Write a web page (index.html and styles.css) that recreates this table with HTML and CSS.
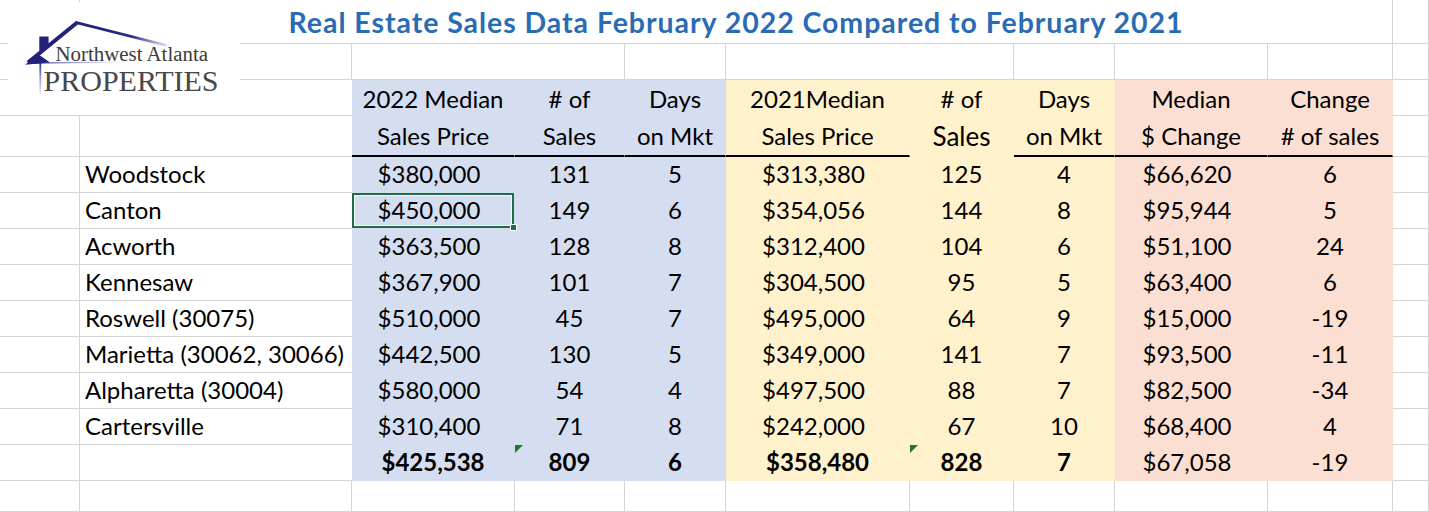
FILE: index.html
```html
<!DOCTYPE html>
<html>
<head>
<meta charset="utf-8">
<link rel="stylesheet" href="styles.css">
</head>
<body>
<div class="sheet">
  <!-- row 1 -->
  <div class="c"></div>
  <div class="c title span9">Real Estate Sales Data February 2022 Compared to February 2021</div>
  <div class="c"></div>
  <!-- row 2 -->
  <div class="c"></div>
  <div class="c"></div>
  <div class="c span2"></div>
  <div class="c"></div>
  <div class="c span2"></div>
  <div class="c"></div>
  <div class="c"></div>
  <div class="c"></div>
  <div class="c"></div>
  <!-- row 3 -->
  <div class="c"></div>
  <div class="c nr"></div>
  <div class="c f blue h1">2022 Median</div>
  <div class="c f blue h1"># of</div>
  <div class="c f blue h1">Days</div>
  <div class="c f yel h1">2021Median</div>
  <div class="c f yel h1"># of</div>
  <div class="c f yel h1">Days</div>
  <div class="c f pch h1">Median</div>
  <div class="c f pch h1">Change</div>
  <div class="c"></div>
  <!-- row 4 -->
  <div class="c"></div>
  <div class="c nr"></div>
  <div class="c f blue h2 hb">Sales Price</div>
  <div class="c f blue h2 hb">Sales</div>
  <div class="c f blue h2 hb">on Mkt</div>
  <div class="c f yel h2 hb">Sales Price</div>
  <div class="c f yel h2 big">Sales</div>
  <div class="c f yel h2 hb">on Mkt</div>
  <div class="c f pch h2 hb">$ Change</div>
  <div class="c f pch h2 hb"># of sales</div>
  <div class="c"></div>
  <!-- data rows -->
  <div class="c"></div><div class="c nr name">Woodstock</div>
  <div class="c f blue cur">$380,000</div><div class="c f blue">131</div><div class="c f blue">5</div>
  <div class="c f yel cur">$313,380</div><div class="c f yel">125</div><div class="c f yel">4</div>
  <div class="c f pch cur">$66,620</div><div class="c f pch">6</div><div class="c"></div>

  <div class="c"></div><div class="c nr name">Canton</div>
  <div class="c f blue cur sel">$450,000</div><div class="c f blue">149</div><div class="c f blue">6</div>
  <div class="c f yel cur">$354,056</div><div class="c f yel">144</div><div class="c f yel">8</div>
  <div class="c f pch cur">$95,944</div><div class="c f pch">5</div><div class="c"></div>

  <div class="c"></div><div class="c nr name">Acworth</div>
  <div class="c f blue cur">$363,500</div><div class="c f blue">128</div><div class="c f blue">8</div>
  <div class="c f yel cur">$312,400</div><div class="c f yel">104</div><div class="c f yel">6</div>
  <div class="c f pch cur">$51,100</div><div class="c f pch">24</div><div class="c"></div>

  <div class="c"></div><div class="c nr name">Kennesaw</div>
  <div class="c f blue cur">$367,900</div><div class="c f blue">101</div><div class="c f blue">7</div>
  <div class="c f yel cur">$304,500</div><div class="c f yel">95</div><div class="c f yel">5</div>
  <div class="c f pch cur">$63,400</div><div class="c f pch">6</div><div class="c"></div>

  <div class="c"></div><div class="c nr name">Roswell (30075)</div>
  <div class="c f blue cur">$510,000</div><div class="c f blue">45</div><div class="c f blue">7</div>
  <div class="c f yel cur">$495,000</div><div class="c f yel">64</div><div class="c f yel">9</div>
  <div class="c f pch cur">$15,000</div><div class="c f pch">-19</div><div class="c"></div>

  <div class="c"></div><div class="c nr name">Marietta (30062, 30066)</div>
  <div class="c f blue cur">$442,500</div><div class="c f blue">130</div><div class="c f blue">5</div>
  <div class="c f yel cur">$349,000</div><div class="c f yel">141</div><div class="c f yel">7</div>
  <div class="c f pch cur">$93,500</div><div class="c f pch">-11</div><div class="c"></div>

  <div class="c"></div><div class="c nr name">Alpharetta (30004)</div>
  <div class="c f blue cur">$580,000</div><div class="c f blue">54</div><div class="c f blue">4</div>
  <div class="c f yel cur">$497,500</div><div class="c f yel">88</div><div class="c f yel">7</div>
  <div class="c f pch cur">$82,500</div><div class="c f pch">-34</div><div class="c"></div>

  <div class="c"></div><div class="c nr name">Cartersville</div>
  <div class="c f blue cur">$310,400</div><div class="c f blue">71</div><div class="c f blue">8</div>
  <div class="c f yel cur">$242,000</div><div class="c f yel">67</div><div class="c f yel">10</div>
  <div class="c f pch cur">$68,400</div><div class="c f pch">4</div><div class="c"></div>

  <div class="c"></div><div class="c nr name"></div>
  <div class="c f blue b">$425,538</div><div class="c f blue b tri">809</div><div class="c f blue b">6</div>
  <div class="c f yel b">$358,480</div><div class="c f yel b tri">828</div><div class="c f yel b">7</div>
  <div class="c f pch cur">$67,058</div><div class="c f pch">-19</div><div class="c"></div>
  <!-- last row -->
  <div class="c"></div><div class="c"></div><div class="c"></div><div class="c"></div><div class="c"></div>
  <div class="c"></div><div class="c"></div><div class="c"></div><div class="c"></div><div class="c"></div><div class="c"></div>

  <div class="logo">
    <svg width="232" height="113" viewBox="8 2 232 113">
      <defs>
        <linearGradient id="rr" x1="77" y1="0" x2="168" y2="0" gradientUnits="userSpaceOnUse">
          <stop offset="0" stop-color="#22227e"/>
          <stop offset="0.6" stop-color="#2a2a8a"/>
          <stop offset="1" stop-color="#4a4ab0" stop-opacity="0.15"/>
        </linearGradient>
        <linearGradient id="wl" x1="0" y1="60" x2="0" y2="95" gradientUnits="userSpaceOnUse">
          <stop offset="0" stop-color="#22227e"/>
          <stop offset="1" stop-color="#5a5ab8" stop-opacity="0.1"/>
        </linearGradient>
        <linearGradient id="cl" x1="28" y1="0" x2="130" y2="0" gradientUnits="userSpaceOnUse">
          <stop offset="0" stop-color="#22227e"/>
          <stop offset="1" stop-color="#6a6ac0" stop-opacity="0"/>
        </linearGradient>
      </defs>
      <polygon points="39.3,36.5 48.6,36.5 48.6,47 39.3,54.5" fill="#22227e"/>
      <line x1="77.5" y1="22.3" x2="28" y2="62.5" stroke="#22227e" stroke-width="4"/>
      <polygon points="25,64.8 50,62.4 38,54" fill="#22227e"/>
      <line x1="76.5" y1="22.6" x2="167" y2="45.5" stroke="url(#rr)" stroke-width="2.8"/>
      <line x1="30" y1="63.2" x2="130" y2="62" stroke="url(#cl)" stroke-width="1.2"/>
      <line x1="40.3" y1="60" x2="40.3" y2="94" stroke="url(#wl)" stroke-width="1.8"/>
      <text x="55.5" y="61" class="lg1" textLength="152.5" lengthAdjust="spacingAndGlyphs">Northwest Atlanta</text>
      <text x="43.5" y="90.8" class="lg2" textLength="175" lengthAdjust="spacingAndGlyphs">PROPERTIES</text>
    </svg>
  </div>
</div>
</body>
</html>
```
FILE: styles.css
```css
html, body {
  margin: 0;
  padding: 0;
  background: #ffffff;
  overflow: hidden;
}

.sheet {
  position: relative;
  width: 1429px;
  height: 512px;
  display: grid;
  grid-template-columns: 80px 272px 163px 110px 101px 184px 104px 101px 153px 125px 36px;
  grid-template-rows: 44px 36px 36px 41px repeat(9, 36px) 31px;
  font-family: Lato, "Open Sans", sans-serif;
  font-size: 24px;
  color: #000;
  overflow: hidden;
}

.c {
  box-sizing: border-box;
  border-right: 1px solid #d4d4d4;
  border-bottom: 1px solid #d4d4d4;
  display: flex;
  align-items: center;
  justify-content: center;
  white-space: nowrap;
  position: relative;
  line-height: 1.2;
}

.nr {
  border-right: none;
}

.span2 { grid-column: span 2; }
.span9 { grid-column: span 9; }

.title {
  font-weight: 700;
  font-size: 28.5px;
  letter-spacing: 0.95px;
  color: #2a6cb3;
  padding-top: 1px;
}

.f { border-color: transparent; }
.blue { background: #d5ddf0; }
.yel { background: #fff1cb; }
.pch { background: #fcdfd3; }

.h1 { padding-top: 4px; }
.h2 { padding-top: 2px; }
.hb { border-bottom: 2px solid #000; }
.big { font-size: 26px; }

.name {
  justify-content: flex-start;
  padding-left: 5px;
}

.cur { padding-right: 8px; }
.b { font-weight: 700; }

.sel {
  box-shadow: inset 0 0 0 2px #1f6e43, inset 0 0 0 3px rgba(255, 255, 255, 0.75);
}
.sel::after {
  content: "";
  position: absolute;
  right: -3px;
  bottom: -3px;
  width: 5px;
  height: 5px;
  background: #1f6e43;
  border: 1px solid #ffffff;
  z-index: 2;
}

.tri::before {
  content: "";
  position: absolute;
  left: 0;
  top: 0;
  width: 0;
  height: 0;
  border-top: 8px solid #1f7a23;
  border-right: 8px solid transparent;
}

.logo {
  position: absolute;
  left: 8px;
  top: 2px;
  width: 232px;
  height: 113px;
  background: #ffffff;
}
.logo svg { display: block; }
.lg1 {
  font-family: "Liberation Serif", serif;
  font-size: 20.5px;
  fill: #3c3c3c;
}
.lg2 {
  font-family: "Liberation Serif", serif;
  font-size: 30px;
  fill: #474747;
}
```
